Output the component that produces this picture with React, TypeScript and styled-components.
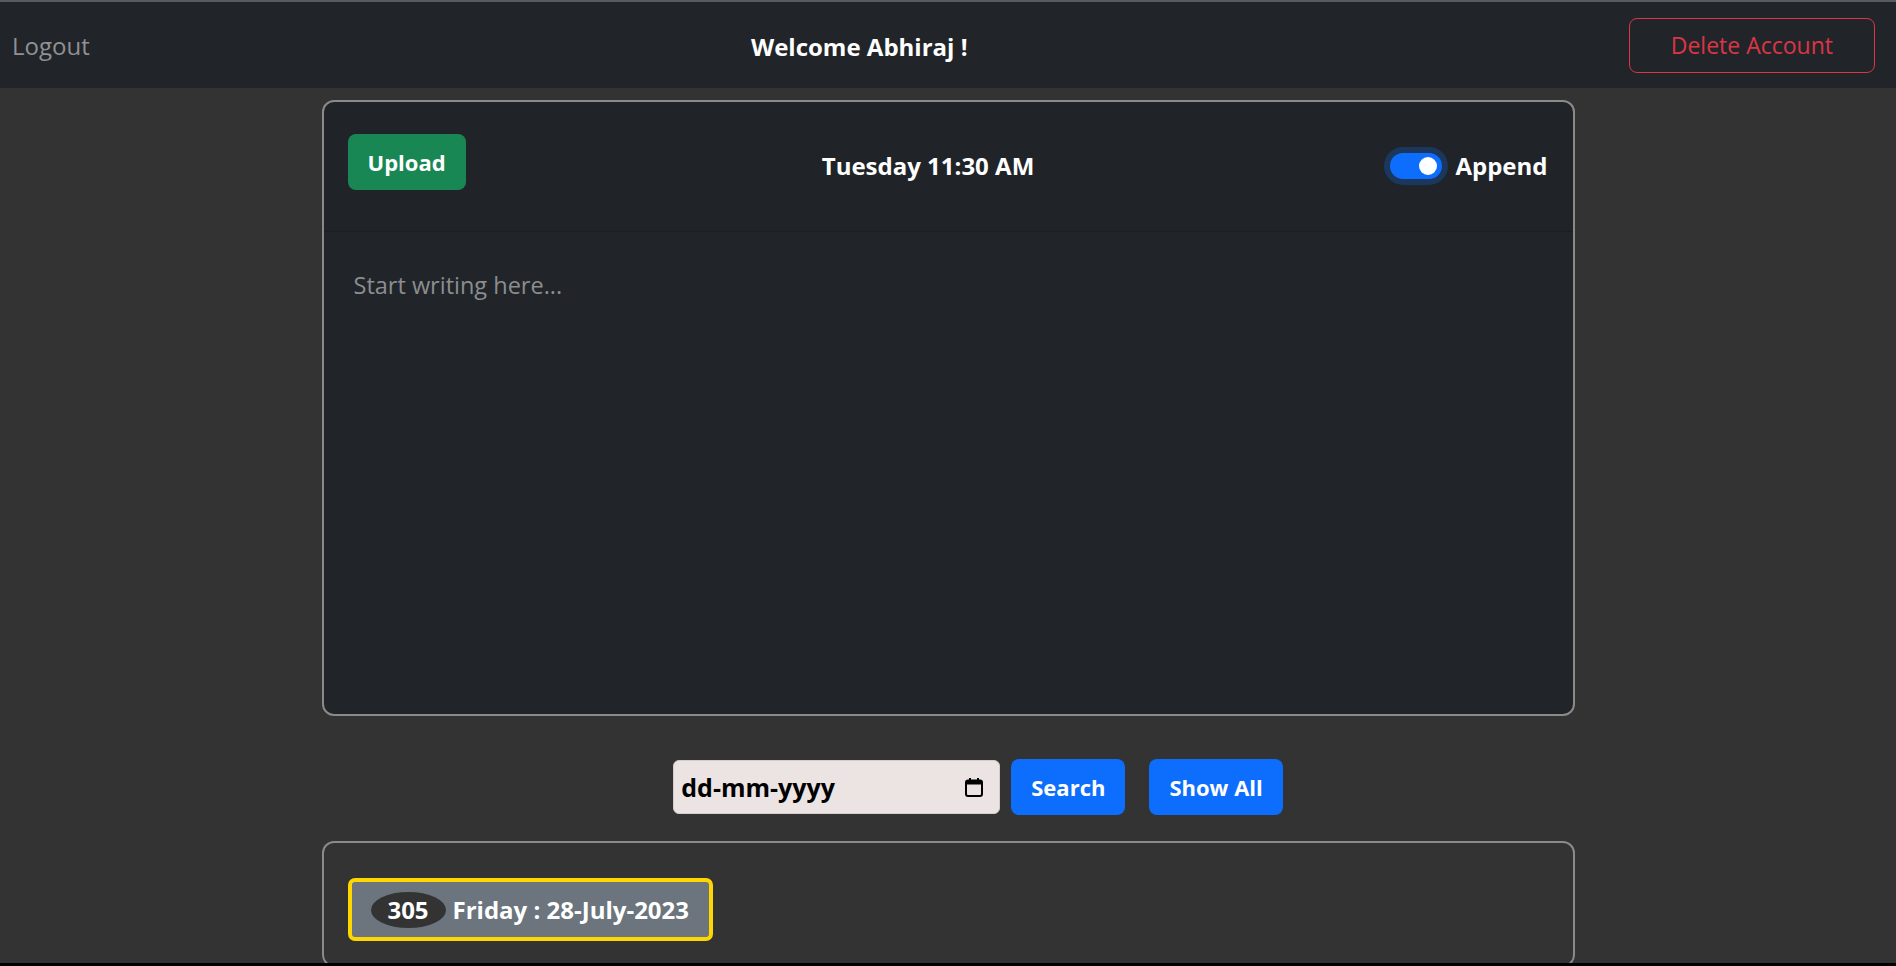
import React from "react";
import styled, { createGlobalStyle } from "styled-components";

const GlobalStyle = createGlobalStyle`
  html, body {
    margin: 0;
    padding: 0;
    background: #333333;
    overflow: hidden;
  }
  * { box-sizing: border-box; }
  body {
    font-family: "Segoe UI", "Open Sans", "Noto Sans", sans-serif;
    color: #ffffff;
  }
`;

const Page = styled.div`
  height: 966px;
  display: flex;
  flex-direction: column;
  border-top: 2px solid #5a5b5f;
  border-bottom: 3px solid #000000;
  overflow: hidden;
`;

const NavBar = styled.nav`
  flex: none;
  height: 86px;
  background: #212529;
  display: flex;
  align-items: center;
  justify-content: space-between;
  padding: 0 21px 0 12px;
`;

const NavLink = styled.a`
  font-size: 24px;
  color: #8f9194;
  text-decoration: none;
  cursor: pointer;
`;

const Welcome = styled.h4`
  margin: 2px 0 0 0;
  font-size: 24px;
  font-weight: 700;
  color: #ffffff;
`;

const OutlineDanger = styled.button`
  height: 55px;
  padding: 0 41px;
  font-family: inherit;
  font-size: 23px;
  color: #dc3545;
  background: transparent;
  border: 1px solid #dc3545;
  border-radius: 8px;
`;

const Main = styled.main`
  flex: 1;
  display: flex;
  flex-direction: column;
  align-items: center;
  padding-top: 12px;
`;

const Card = styled.section<{ $dark?: boolean; $height?: string }>`
  width: 1253px;
  flex: none;
  height: ${(p) => p.$height || "auto"};
  background: ${(p) => (p.$dark ? "#212529" : "transparent")};
  border: 2px solid #8a8a8a;
  border-radius: 12px;
  display: flex;
  flex-direction: column;
  overflow: hidden;
`;

const CardHeader = styled.header`
  flex: none;
  height: 130px;
  display: flex;
  align-items: center;
  justify-content: space-between;
  padding: 0 24px 10px 24px;
  border-bottom: 1px solid #1b1e22;
  background: rgba(0, 0, 0, 0.02);
`;

const SolidButton = styled.button<{ $variant: "success" | "primary" }>`
  height: 56px;
  padding: 0 20px;
  font-family: inherit;
  font-size: 22px;
  font-weight: 700;
  color: #ffffff;
  background: ${(p) => (p.$variant === "success" ? "#198754" : "#0d6efd")};
  border: none;
  border-radius: 8px;
`;

const TimeTitle = styled.h4`
  margin: 8px 0 0 0;
  font-size: 24px;
  font-weight: 700;
  color: #ffffff;
`;

const SwitchLabel = styled.label`
  display: flex;
  align-items: center;
  gap: 13px;
  margin: 8px 1px 0 0;
  font-size: 24px;
  font-weight: 700;
  color: #ffffff;
`;

const SwitchTrack = styled.span`
  position: relative;
  width: 52px;
  height: 26px;
  border-radius: 13px;
  background: #0d6efd;
  box-shadow: 0 0 0 6px rgba(13, 110, 253, 0.25);
`;

const SwitchKnob = styled.span`
  position: absolute;
  right: 5px;
  top: 4px;
  width: 18px;
  height: 18px;
  border-radius: 50%;
  background: #ffffff;
`;

const Editor = styled.textarea`
  flex: 1;
  width: 100%;
  padding: 36px 30px;
  background: transparent;
  border: none;
  outline: none;
  resize: none;
  font-family: inherit;
  font-size: 23.5px;
  line-height: 1.5;
  color: #ffffff;
  &::placeholder {
    color: #8b8d90;
  }
`;

const SearchRow = styled.form`
  flex: none;
  display: flex;
  align-items: center;
  justify-content: center;
  width: 100%;
  margin: 43px 0 26px 0;
  padding-left: 60px;
`;

const DateField = styled.label`
  display: flex;
  align-items: center;
  width: 327px;
  height: 54px;
  padding: 0 15px 0 7px;
  background: #ebe4e2;
  border: 1px solid #d4cdcb;
  border-radius: 6px;
  margin-right: 11px;
`;

const DateInput = styled.input`
  flex: 1;
  min-width: 0;
  border: none;
  outline: none;
  background: transparent;
  font-family: inherit;
  font-size: 25px;
  font-weight: 700;
  color: #000000;
  padding: 0;
  &::placeholder {
    color: #000000;
    opacity: 1;
  }
`;

const Spacer = styled.span`
  width: 24px;
`;

const EntryBadge = styled.div`
  display: inline-flex;
  align-items: center;
  gap: 7px;
  height: 63px;
  padding: 0 20px 0 19px;
  background: #6c757d;
  border: 4px solid #ffd700;
  border-radius: 7px;
  font-size: 24px;
  font-weight: 700;
  color: #ffffff;
`;

const CountOval = styled.span`
  display: inline-flex;
  align-items: center;
  justify-content: center;
  width: 75px;
  height: 36px;
  border-radius: 50%;
  background: #333333;
`;

const EntryList = styled.div`
  padding: 35px 24px 24px 24px;
`;

const CalendarIcon = () => (
  <svg width="20" height="21" viewBox="0 0 20 21" fill="none">
    <rect x="2" y="3.5" width="16" height="15.5" rx="2" stroke="#000" strokeWidth="2" />
    <rect x="2" y="3.5" width="16" height="4" fill="#000" />
    <rect x="5" y="1" width="2" height="4" fill="#000" />
    <rect x="13" y="1" width="2" height="4" fill="#000" />
  </svg>
);

export default function App() {
  return (
    <>
      <GlobalStyle />
      <Page>
        <NavBar>
          <NavLink>Logout</NavLink>
          <Welcome>Welcome Abhiraj !</Welcome>
          <OutlineDanger>Delete Account</OutlineDanger>
        </NavBar>
        <Main>
          <Card $dark $height="616px">
            <CardHeader>
              <SolidButton $variant="success">Upload</SolidButton>
              <TimeTitle>Tuesday 11:30 AM</TimeTitle>
              <SwitchLabel>
                <SwitchTrack>
                  <SwitchKnob />
                </SwitchTrack>
                Append
              </SwitchLabel>
            </CardHeader>
            <Editor placeholder="Start writing here..." />
          </Card>
          <SearchRow onSubmit={(e) => e.preventDefault()}>
            <DateField>
              <DateInput type="text" placeholder="dd-mm-yyyy" />
              <CalendarIcon />
            </DateField>
            <SolidButton $variant="primary" type="submit">Search</SolidButton>
            <Spacer />
            <SolidButton $variant="primary" type="button">Show All</SolidButton>
          </SearchRow>
          <Card>
            <EntryList>
              <EntryBadge>
                <CountOval>305</CountOval>
                Friday : 28-July-2023
              </EntryBadge>
            </EntryList>
          </Card>
        </Main>
      </Page>
    </>
  );
}
